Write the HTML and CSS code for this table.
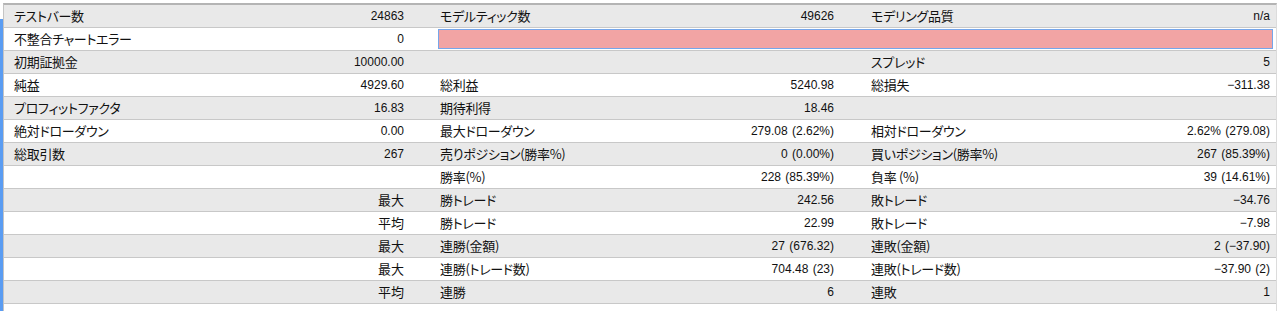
FILE: index.html
```html
<!DOCTYPE html>
<html lang="ja">
<head>
<meta charset="utf-8">
<title>レポート</title>
<link rel="stylesheet" href="styles.css">
</head>
<body>
<div class="frame">
  <div class="accent"></div>
  <div class="report">
    <div class="row">
      <div class="lab lab1">テストバー数</div><div class="val">24863</div>
      <div class="lab lab2">モデルティック数</div><div class="val">49626</div>
      <div class="lab lab3">モデリング品質</div><div class="val">n/a</div>
    </div>
    <div class="row">
      <div class="lab lab1">不整合チャートエラー</div><div class="val">0</div>
      <div class="errcell"><div class="errbar"></div></div>
    </div>
    <div class="row">
      <div class="lab lab1">初期証拠金</div><div class="val">10000.00</div>
      <div class="lab lab2"></div><div class="val"></div>
      <div class="lab lab3">スプレッド</div><div class="val">5</div>
    </div>
    <div class="row">
      <div class="lab lab1">純益</div><div class="val">4929.60</div>
      <div class="lab lab2">総利益</div><div class="val">5240.98</div>
      <div class="lab lab3">総損失</div><div class="val">−311.38</div>
    </div>
    <div class="row">
      <div class="lab lab1">プロフィットファクタ</div><div class="val">16.83</div>
      <div class="lab lab2">期待利得</div><div class="val">18.46</div>
      <div class="lab lab3"></div><div class="val"></div>
    </div>
    <div class="row">
      <div class="lab lab1">絶対ドローダウン</div><div class="val">0.00</div>
      <div class="lab lab2">最大ドローダウン</div><div class="val">279.08 (2.62%)</div>
      <div class="lab lab3">相対ドローダウン</div><div class="val">2.62% (279.08)</div>
    </div>
    <div class="row">
      <div class="lab lab1">総取引数</div><div class="val">267</div>
      <div class="lab lab2">売りポジション(勝率%)</div><div class="val">0 (0.00%)</div>
      <div class="lab lab3">買いポジション(勝率%)</div><div class="val">267 (85.39%)</div>
    </div>
    <div class="row">
      <div class="lab lab1"></div><div class="val"></div>
      <div class="lab lab2">勝率(%)</div><div class="val">228 (85.39%)</div>
      <div class="lab lab3">負率 (%)</div><div class="val">39 (14.61%)</div>
    </div>
    <div class="row">
      <div class="lab lab1"></div><div class="val jp">最大</div>
      <div class="lab lab2">勝トレード</div><div class="val">242.56</div>
      <div class="lab lab3">敗トレード</div><div class="val">−34.76</div>
    </div>
    <div class="row">
      <div class="lab lab1"></div><div class="val jp">平均</div>
      <div class="lab lab2">勝トレード</div><div class="val">22.99</div>
      <div class="lab lab3">敗トレード</div><div class="val">−7.98</div>
    </div>
    <div class="row">
      <div class="lab lab1"></div><div class="val jp">最大</div>
      <div class="lab lab2">連勝(金額)</div><div class="val">27 (676.32)</div>
      <div class="lab lab3">連敗(金額)</div><div class="val">2 (−37.90)</div>
    </div>
    <div class="row">
      <div class="lab lab1"></div><div class="val jp">最大</div>
      <div class="lab lab2">連勝(トレード数)</div><div class="val">704.48 (23)</div>
      <div class="lab lab3">連敗(トレード数)</div><div class="val">−37.90 (2)</div>
    </div>
    <div class="row">
      <div class="lab lab1"></div><div class="val jp">平均</div>
      <div class="lab lab2">連勝</div><div class="val">6</div>
      <div class="lab lab3">連敗</div><div class="val">1</div>
    </div>
  </div>
</div>
</body>
</html>
```

FILE: styles.css
```css
html, body {
  margin: 0;
  padding: 0;
  background: #ffffff;
}
body {
  width: 1280px;
  height: 311px;
  overflow: hidden;
  color: #111111;
  font-family: "Noto Sans CJK JP", sans-serif;
}
.frame {
  display: flex;
  height: 311px;
}
.accent {
  width: 3px;
  margin-top: 19px;
  background: #5a9cf2;
  flex: none;
}
.report {
  margin-top: 3px;
  width: 1272px;
  border-top: 2px solid #b4b4b4;
  border-left: 1px solid #c4c4c4;
  border-right: 1px solid #dcdcdc;
  flex: none;
}
.row {
  display: grid;
  grid-template-columns: 206px 200px 230px 200px 230px 206px;
  height: 22px;
  border-bottom: 1px solid #c8c8c8;
  background: #ffffff;
}
.row:nth-child(odd) {
  background: #e9e9e9;
}
.lab, .val {
  display: flex;
  align-items: center;
  white-space: nowrap;
  overflow: hidden;
  line-height: 1;
}
.lab {
  padding-bottom: 1px;
  font-family: "Noto Sans CJK JP", sans-serif;
  font-size: 13px;
  font-feature-settings: "palt";
  letter-spacing: -0.3px;
}
.lab1 { padding-left: 10px; }
.lab2 { padding-left: 30px; }
.lab3 { padding-left: 31px; }
.val {
  justify-content: flex-end;
  padding-right: 6px;
  font-family: "Liberation Sans", "Noto Sans CJK JP", sans-serif;
  font-size: 12px;
  word-spacing: 1px;
}
.val.jp {
  padding-bottom: 1px;
  font-family: "Noto Sans CJK JP", sans-serif;
  font-size: 13px;
}
.errcell {
  grid-column: 3 / 7;
  display: flex;
  padding: 1px 3px 0 28px;
}
.errbar {
  flex: 1;
  height: 18px;
  background: #f2a4a4;
  border: 1px solid #76a6ea;
}
```
